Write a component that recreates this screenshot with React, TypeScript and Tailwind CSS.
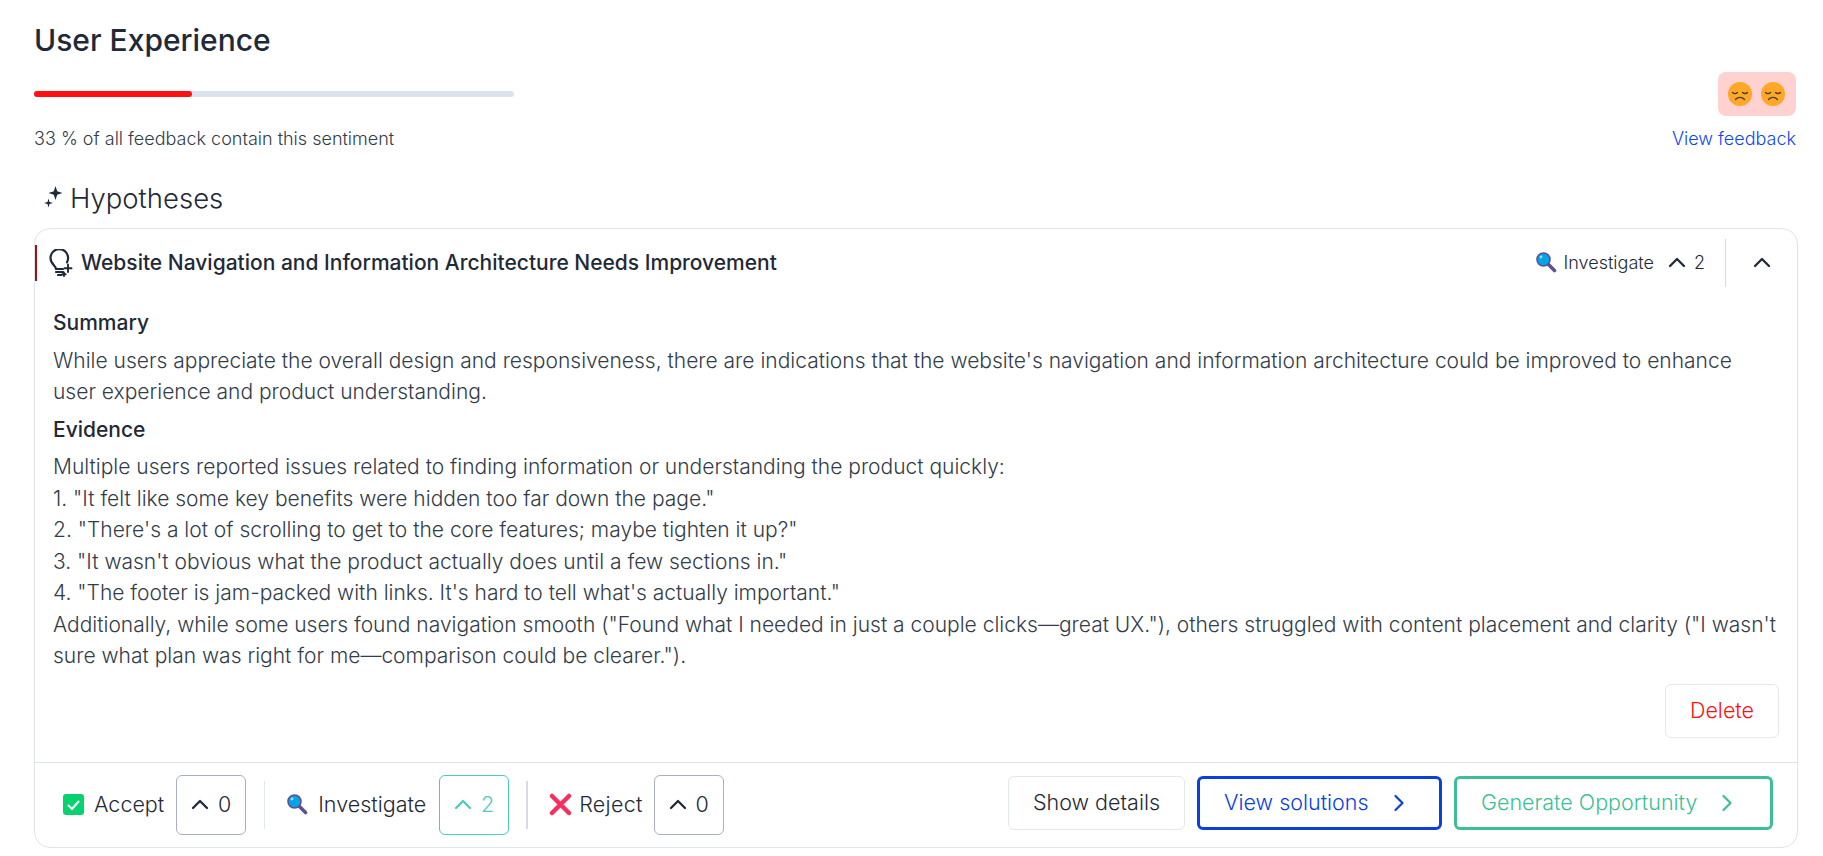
const Sad = () => (
  <svg width="24" height="24" viewBox="0 0 24 24">
    <circle cx="12" cy="12" r="12" fill="#ffa726" />
    <path d="M4.500 10.500c1.300 1.300 3.700 1.300 5 0M14.500 10.500c1.300 1.300 3.700 1.300 5 0" stroke="#4a3a2a" strokeWidth="1.300" fill="none" strokeLinecap="round" />
    <path d="M7.500 17.500c2.500-2.800 6.500-2.800 9 0" stroke="#4a3a2a" strokeWidth="1.300" fill="none" strokeLinecap="round" />
  </svg>
);

const Magnifier = ({ size = 21 }: { size?: number }) => (
  <svg width={size} height={size} viewBox="0 0 21 21">
    <path d="M12.500 12.500l6 6" stroke="#5c5293" strokeWidth="3.600" strokeLinecap="round" />
    <circle cx="7.500" cy="7.500" r="6.500" fill="#05a3e8" stroke="#5c5293" strokeWidth="1.600" />
    <circle cx="5" cy="5" r="1.400" fill="#a6e4fb" />
  </svg>
);

const Sparkles = () => (
  <svg width="22" height="24" viewBox="0 0 22 24" fill="#1f2937">
    <path d="M14.500 0l1.700 5.300L21.500 7l-5.300 1.700L14.500 14l-1.700-5.300L7.500 7l5.300-1.700z" />
    <path d="M7.500 12.500l1 3.500 3.500 1-3.500 1-1 3.500-1-3.500L3 17l3.500-1z" />
  </svg>
);

const Bulb = () => (
  <svg width="24" height="28" viewBox="0 0 24 28" fill="none" stroke="#1f2937" strokeWidth="2.200" strokeLinecap="round">
    <path d="M7 20c0-3.200-5.500-5-5.500-11a8.800 8.800 0 0 1 17.600 0c0 1.600-.4 3-1.100 4.300" />
    <path d="M7 20h7M7 23h7M9 26h3.500" />
    <path d="M19 15.500v7.500M15.500 19.300h7M15 23.500v3.500M13.300 25.300h3.400" strokeWidth="1.900" />
  </svg>
);

const Caret = ({ className = "" }: { className?: string }) => (
  <svg width="18" height="11" viewBox="0 0 18 11" fill="none" stroke="currentColor" strokeWidth="2.300" strokeLinecap="round" strokeLinejoin="round" className={className}>
    <path d="M2 9l7-7 7 7" />
  </svg>
);

const Arrow = () => (
  <svg width="12" height="18" viewBox="0 0 12 18" fill="none" stroke="currentColor" strokeWidth="2.200" strokeLinecap="round" strokeLinejoin="round">
    <path d="M2.500 2l7 7-7 7" />
  </svg>
);

const VoteBox = ({ count, active }: { count: number; active?: boolean }) => (
  <div
    className={`flex items-center justify-center gap-[9px] w-[70px] h-[60px] rounded-md border text-[21.500px] font-light ${
      active ? "border-[#4fc9bd] text-[#4fc9bd]" : "border-[#a8afc0] text-[#1f2937]"
    }`}
  >
    <Caret />
    <span>{count}</span>
  </div>
);

const evidence = [
  "Multiple users reported issues related to finding information or understanding the product quickly:",
  '1. "It felt like some key benefits were hidden too far down the page."',
  '2. "There\'s a lot of scrolling to get to the core features; maybe tighten it up?"',
  '3. "It wasn\'t obvious what the product actually does until a few sections in."',
  '4. "The footer is jam-packed with links. It\'s hard to tell what\'s actually important."',
  'Additionally, while some users found navigation smooth ("Found what I needed in just a couple clicks—great UX."), others struggled with content placement and clarity ("I wasn\'t sure what plan was right for me—comparison could be clearer.").',
];

export default function App() {
  return (
    <div className="w-full min-h-[856px] bg-white font-['Inter',sans-serif] text-[#1f2937] pl-[34px] pr-[25px] pt-[20px]">
      <h1 className="text-[30px] leading-[40px] font-medium">User Experience</h1>

      <div className="flex justify-between items-start mt-[12px]">
        <div>
          <div className="w-[480px] h-[6px] mt-[19px] rounded-full bg-[#dde3ea]">
            <div className="w-[158px] h-full rounded-full bg-[#ff1111]" />
          </div>
          <p className="mt-[30px] text-[18px] leading-[24px] font-light text-[#333c4a]">
            33 % of all feedback contain this sentiment
          </p>
        </div>
        <div className="flex flex-col items-end pr-[2px]">
          <div className="flex items-center gap-[9px] w-[78px] h-[44px] px-[10px] rounded-lg bg-[#ffd1d1]">
            <Sad />
            <Sad />
          </div>
          <a className="mt-[11px] text-[18px] leading-[24px] font-light text-[#0f47ee]">View feedback</a>
        </div>
      </div>

      <h2 className="flex items-center gap-[7px] mt-[27px] pl-[7px] text-[27.500px] leading-[40px] font-light">
        <Sparkles />
        Hypotheses
      </h2>

      <div className="mt-[10px] rounded-2xl border border-[#dfe4ec]">
        <div className="flex items-center justify-between h-[67px] pr-[26px]">
          <div className="flex items-center h-[36px] border-l-2 border-[#a11010] pl-[12px] gap-[8px]">
            <Bulb />
            <span className="text-[21px] font-medium">Website Navigation and Information Architecture Needs Improvement</span>
          </div>
          <div className="flex items-center text-[18px] font-light">
            <Magnifier />
            <span className="ml-[7px]">Investigate</span>
            <Caret className="ml-[14px]" />
            <span className="ml-[8px]">2</span>
            <div className="w-px h-[48px] bg-[#d5dce6] ml-[20px] mr-[27px]" />
            <Caret />
          </div>
        </div>

        <div className="px-[18px] pt-[11px] text-[21px] leading-[31.500px] font-light text-[#333c4a]">
          <h3 className="font-medium text-[#1f2937]">Summary</h3>
          <p className="mt-[6px]">
            While users appreciate the overall design and responsiveness, there are indications that the website's navigation and information architecture could be improved to enhance user experience and product understanding.
          </p>
          <h3 className="font-medium text-[#1f2937] mt-[6px]">Evidence</h3>
          <div className="mt-[6px]">
            {evidence.map((line) => (
              <p key={line}>{line}</p>
            ))}
          </div>
          <div className="flex justify-end mt-[12px]">
            <button className="h-[54px] w-[114px] rounded-md border border-[#e3e7ee] text-[21.500px] font-light text-[#ff0f0f]">
              Delete
            </button>
          </div>
        </div>

        <div className="flex items-center justify-between h-[85px] mt-[24px] border-t border-[#dfe4ec] pl-[28px] pr-[24px] text-[21.500px] font-light">
          <div className="flex items-center">
            <svg width="21" height="21" viewBox="0 0 21 21">
              <rect width="21" height="21" rx="3" fill="#06d36f" />
              <path d="M5 11l4 4 7-8" stroke="#fff" strokeWidth="2.200" fill="none" />
            </svg>
            <span className="ml-[10px] mr-[12px]">Accept</span>
            <VoteBox count={0} />
            <div className="w-px h-[48px] bg-[#e3e7ee] ml-[18px] mr-[22px]" />
            <Magnifier />
            <span className="ml-[10px] mr-[13px]">Investigate</span>
            <VoteBox count={2} active />
            <div className="w-[2px] h-[48px] bg-[#d5dbe8] ml-[17px] mr-[21px]" />
            <svg width="23" height="23" viewBox="0 0 23 23">
              <path d="M3 3l17 17M20 3L3 20" stroke="#f5305c" strokeWidth="4.500" strokeLinecap="round" />
            </svg>
            <span className="ml-[7px] mr-[11px] tracking-[0.3px]">Reject</span>
            <VoteBox count={0} />
          </div>
          <div className="flex items-center gap-[12px] mb-[4px]">
            <button className="h-[54px] w-[177px] rounded-md border border-[#e3e7ee]">Show details</button>
            <button className="flex items-center gap-[24px] h-[54px] w-[245px] pl-[24px] rounded-md border-[3px] border-[#0a3fe0] text-[#0a3fe0]">
              View solutions
              <Arrow />
            </button>
            <button className="flex items-center gap-[24px] h-[54px] w-[319px] pl-[24px] rounded-md border-[3px] border-[#3dbf95] text-[#3dbf95]">
              Generate Opportunity
              <Arrow />
            </button>
          </div>
        </div>
      </div>
    </div>
  );
}
